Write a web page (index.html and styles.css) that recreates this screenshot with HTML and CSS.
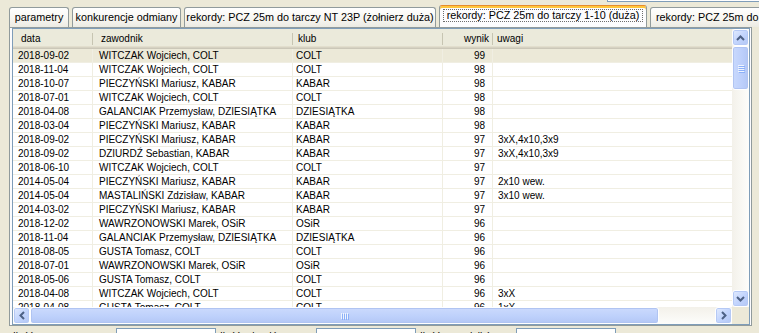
FILE: index.html
```html
<!DOCTYPE html>
<html lang="pl">
<head>
<meta charset="utf-8">
<title>rekordy</title>
<link rel="stylesheet" href="styles.css">
</head>
<body>
<div class="window">
  <div class="topbar"><div class="topfield"></div></div>
  <div class="tabs">
    <div class="tab t1">parametry</div>
    <div class="tab t2">konkurencje odmiany</div>
    <div class="tab t3">rekordy: PCZ 25m do tarczy NT 23P (żołnierz duża)</div>
    <div class="tab active t4"><span class="focus">rekordy: PCZ 25m do tarczy 1-10 (duża)</span></div>
    <div class="tab t5">rekordy: PCZ 25m do tarczy 1-10 (mała)</div>
  </div>
  <div class="panel">
    <div class="lv">
      <div class="lv-body">
        <div class="lv-head">
          <div class="h h1">data</div>
          <div class="h h2">zawodnik</div>
          <div class="h h3">klub</div>
          <div class="h h4">wynik</div>
          <div class="h h5">uwagi</div>
        </div>
        <div class="row sel"><div class="c c1">2018-09-02</div><div class="c c2">WITCZAK Wojciech, COLT</div><div class="c c3">COLT</div><div class="c c4">99</div><div class="c c5"></div></div>
        <div class="row"><div class="c c1">2018-11-04</div><div class="c c2">WITCZAK Wojciech, COLT</div><div class="c c3">COLT</div><div class="c c4">98</div><div class="c c5"></div></div>
        <div class="row"><div class="c c1">2018-10-07</div><div class="c c2">PIECZYŃSKI Mariusz, KABAR</div><div class="c c3">KABAR</div><div class="c c4">98</div><div class="c c5"></div></div>
        <div class="row"><div class="c c1">2018-07-01</div><div class="c c2">WITCZAK Wojciech, COLT</div><div class="c c3">COLT</div><div class="c c4">98</div><div class="c c5"></div></div>
        <div class="row"><div class="c c1">2018-04-08</div><div class="c c2">GALANCIAK Przemysław, DZIESIĄTKA</div><div class="c c3">DZIESIĄTKA</div><div class="c c4">98</div><div class="c c5"></div></div>
        <div class="row"><div class="c c1">2018-03-04</div><div class="c c2">PIECZYŃSKI Mariusz, KABAR</div><div class="c c3">KABAR</div><div class="c c4">98</div><div class="c c5"></div></div>
        <div class="row"><div class="c c1">2018-09-02</div><div class="c c2">PIECZYŃSKI Mariusz, KABAR</div><div class="c c3">KABAR</div><div class="c c4">97</div><div class="c c5">3xX,4x10,3x9</div></div>
        <div class="row"><div class="c c1">2018-09-02</div><div class="c c2">DZIURDŹ Sebastian, KABAR</div><div class="c c3">KABAR</div><div class="c c4">97</div><div class="c c5">3xX,4x10,3x9</div></div>
        <div class="row"><div class="c c1">2018-06-10</div><div class="c c2">WITCZAK Wojciech, COLT</div><div class="c c3">COLT</div><div class="c c4">97</div><div class="c c5"></div></div>
        <div class="row"><div class="c c1">2014-05-04</div><div class="c c2">PIECZYŃSKI Mariusz, KABAR</div><div class="c c3">KABAR</div><div class="c c4">97</div><div class="c c5">2x10 wew.</div></div>
        <div class="row"><div class="c c1">2014-05-04</div><div class="c c2">MASTALIŃSKI Zdzisław, KABAR</div><div class="c c3">KABAR</div><div class="c c4">97</div><div class="c c5">3x10 wew.</div></div>
        <div class="row"><div class="c c1">2014-03-02</div><div class="c c2">PIECZYŃSKI Mariusz, KABAR</div><div class="c c3">KABAR</div><div class="c c4">97</div><div class="c c5"></div></div>
        <div class="row"><div class="c c1">2018-12-02</div><div class="c c2">WAWRZONOWSKI Marek, OSiR</div><div class="c c3">OSiR</div><div class="c c4">96</div><div class="c c5"></div></div>
        <div class="row"><div class="c c1">2018-11-04</div><div class="c c2">GALANCIAK Przemysław, DZIESIĄTKA</div><div class="c c3">DZIESIĄTKA</div><div class="c c4">96</div><div class="c c5"></div></div>
        <div class="row"><div class="c c1">2018-08-05</div><div class="c c2">GUSTA Tomasz, COLT</div><div class="c c3">COLT</div><div class="c c4">96</div><div class="c c5"></div></div>
        <div class="row"><div class="c c1">2018-07-01</div><div class="c c2">WAWRZONOWSKI Marek, OSiR</div><div class="c c3">OSiR</div><div class="c c4">96</div><div class="c c5"></div></div>
        <div class="row"><div class="c c1">2018-05-06</div><div class="c c2">GUSTA Tomasz, COLT</div><div class="c c3">COLT</div><div class="c c4">96</div><div class="c c5"></div></div>
        <div class="row"><div class="c c1">2018-04-08</div><div class="c c2">WITCZAK Wojciech, COLT</div><div class="c c3">COLT</div><div class="c c4">96</div><div class="c c5">3xX</div></div>
        <div class="row"><div class="c c1">2018-04-08</div><div class="c c2">GUSTA Tomasz, COLT</div><div class="c c3">COLT</div><div class="c c4">96</div><div class="c c5">1xX</div></div>
      </div>
      <div class="vscroll">
        <div class="sbtn"><svg width="9" height="6" viewBox="0 0 9 6"><path d="M1 5 L4.5 1.5 L8 5" fill="none" stroke="#4d6185" stroke-width="2"/></svg></div>
        <div class="vthumb"><span class="grip"></span><span class="grip"></span><span class="grip"></span><span class="grip"></span></div>
        <div class="vtrack"></div>
        <div class="sbtn"><svg width="9" height="6" viewBox="0 0 9 6"><path d="M1 1 L4.5 4.5 L8 1" fill="none" stroke="#4d6185" stroke-width="2"/></svg></div>
      </div>
      <div class="hscroll">
        <div class="sbtn"><svg width="6" height="9" viewBox="0 0 6 9"><path d="M5 1 L1.5 4.5 L5 8" fill="none" stroke="#4d6185" stroke-width="2"/></svg></div>
        <div class="hthumb"><span class="hgrip"></span><span class="hgrip"></span><span class="hgrip"></span><span class="hgrip"></span></div>
        <div class="htrack"></div>
        <div class="sbtn"><svg width="6" height="9" viewBox="0 0 6 9"><path d="M1 1 L4.5 4.5 L1 8" fill="none" stroke="#4d6185" stroke-width="2"/></svg></div>
      </div>
      <div class="corner"></div>
    </div>
  </div>
  <div class="footer">
    <div class="flabel">Ilość:</div>
    <div class="fbox"></div>
    <div class="flabel">Ilość rekordów:</div>
    <div class="fbox"></div>
    <div class="flabel">Ilość zawodników:</div>
    <div class="fbox"></div>
  </div>
</div>
</body>
</html>
```

FILE: styles.css
```css
html, body {
  margin: 0;
  padding: 0;
}
body {
  background: #ece9d8;
  font-family: "Liberation Sans", Arial, sans-serif;
  font-size: 10px;
  color: #000;
  overflow: hidden;
}
.window {
  width: 759px;
  height: 333px;
  overflow: hidden;
}

/* top cut-off field */
.topbar {
  height: 2px;
  overflow: hidden;
}
.topfield {
  margin-left: 607px;
  width: 160px;
  height: 1px;
  background: #fff;
  border-left: 1px solid #7f9db9;
  border-bottom: 1px solid #7f9db9;
}

/* tabs */
.tabs {
  display: flex;
  align-items: flex-end;
  height: 22px;
  margin-top: 3px;
  padding-left: 9px;
  overflow: hidden;
  font-size: 10.8px;
}
.tab {
  flex-shrink: 0;
  box-sizing: border-box;
  height: 20px;
  margin-right: 3px;
  border: 1px solid #919b9c;
  border-bottom: none;
  border-radius: 3px 3px 0 0;
  background: linear-gradient(#ffffff, #f7f6f1 55%, #ecebe3);
  line-height: 19px;
  text-align: center;
  white-space: nowrap;
  overflow: hidden;
}
.t1 { width: 60px; }
.t2 { width: 109px; }
.t3 { width: 252px; }
.t4 { width: 208px; }
.t5 { width: 200px; text-align: left; padding-left: 5px; }
.tab.active {
  position: relative;
  z-index: 1;
  height: 23px;
  margin-bottom: -1px;
  border-top-color: #e68b2c;
  background: #fcfcfe;
  box-shadow: inset 0 2px 0 #ffc73c;
  line-height: 11px;
}
.focus {
  display: block;
  margin: 3px 3px 0;
  border: 1px dotted #6d6d6d;
  line-height: 11px;
}

/* panel */
.panel {
  box-sizing: border-box;
  width: 743px;
  margin-left: 9px;
  padding: 0 1px 0 2px;
  border: 1px solid #919b9c;
  background: #fcfcfe;
}
.lv {
  box-sizing: border-box;
  height: 297px;
  border: 1px solid #7f9db9;
  background: #fff;
  display: grid;
  grid-template-columns: 1fr 17px;
  grid-template-rows: 1fr 17px;
}
.lv-body {
  overflow: hidden;
  min-width: 0;
  min-height: 0;
}
.lv-head, .row {
  display: grid;
  grid-template-columns: 80px 200px 150px 50px 1fr;
  width: 784px;
}
.lv-head {
  height: 20px;
  line-height: 20px;
  background: linear-gradient(to bottom, #ebeadb 0, #ebeadb 17px, #e2decd 17px, #e2decd 18px, #d6d2c2 18px, #d6d2c2 19px, #cbc7b8 19px);
}
.h {
  white-space: nowrap;
  background: linear-gradient(#c7c5b2, #c7c5b2) right 0 top 4px / 1px 12px no-repeat;
}
.h1 { padding-left: 8px; }
.h2 { padding-left: 8px; }
.h3 { padding-left: 5px; }
.h4 { text-align: right; padding-right: 4px; }
.h5 { padding-left: 4px; background: none; }

.row {
  height: 14px;
  box-sizing: border-box;
  border-bottom: 1px solid #f0eee2;
  line-height: 13px;
}
.row.sel {
  background: #ece9d8;
}
.c {
  white-space: nowrap;
  overflow: hidden;
  border-right: 1px solid #f0eee2;
}
.c1 { padding-left: 5px; }
.c2 { padding-left: 6px; }
.c3 { padding-left: 3px; }
.c4 { text-align: right; padding-right: 7px; }
.c5 { padding-left: 5px; border-right: none; }

/* scrollbars */
.sbtn {
  box-sizing: border-box;
  width: 17px;
  height: 17px;
  flex-shrink: 0;
  border: 1px solid #fff;
  border-radius: 3px;
  background: linear-gradient(135deg, #e3ecfe, #c3d5fd 50%, #b3c7f5);
  box-shadow: inset 0 0 0 1px #b5c9f5;
  display: flex;
  align-items: center;
  justify-content: center;
}
.vscroll {
  display: flex;
  flex-direction: column;
  background: linear-gradient(to right, #f3f1ea, #fdfdfb);
}
.vthumb {
  box-sizing: border-box;
  height: 44px;
  flex-shrink: 0;
  border: 1px solid #fff;
  border-radius: 3px;
  background: linear-gradient(to right, #c9d9fd, #bccffb 60%, #b3c7f5);
  box-shadow: inset 0 0 0 1px #b0c4f2;
  display: flex;
  flex-direction: column;
  align-items: center;
  justify-content: center;
  gap: 1px;
}
.grip {
  display: block;
  width: 6px;
  height: 1px;
  background: #eef4fe;
  box-shadow: 1px 1px 0 #8cb0f8;
}
.vtrack { flex: 1; }
.hscroll {
  display: flex;
  background: linear-gradient(to bottom, #f3f1ea, #fdfdfb);
}
.hthumb {
  box-sizing: border-box;
  width: 629px;
  flex-shrink: 0;
  border: 1px solid #fff;
  border-radius: 3px;
  background: linear-gradient(to bottom, #cbdafd, #bdd0fb 60%, #b3c7f5);
  box-shadow: inset 0 0 0 1px #b0c4f2;
  display: flex;
  align-items: center;
  justify-content: center;
  gap: 1px;
}
.hgrip {
  display: block;
  width: 1px;
  height: 6px;
  background: #eef4fe;
  box-shadow: 1px 1px 0 #8cb0f8;
}
.htrack { flex: 1; }
.corner { background: #ece9d8; }

/* footer */
.footer {
  display: grid;
  grid-template-columns: 107px 100px 100px 100px 100px 100px;
  margin-top: 2px;
  padding-left: 9px;
  height: 20px;
}
.flabel {
  padding-left: 4px;
  padding-top: 2px;
  line-height: 14px;
  white-space: nowrap;
  overflow: hidden;
}
.fbox {
  box-sizing: border-box;
  height: 20px;
  border: 1px solid #7f9db9;
  background: #fff;
}
```
